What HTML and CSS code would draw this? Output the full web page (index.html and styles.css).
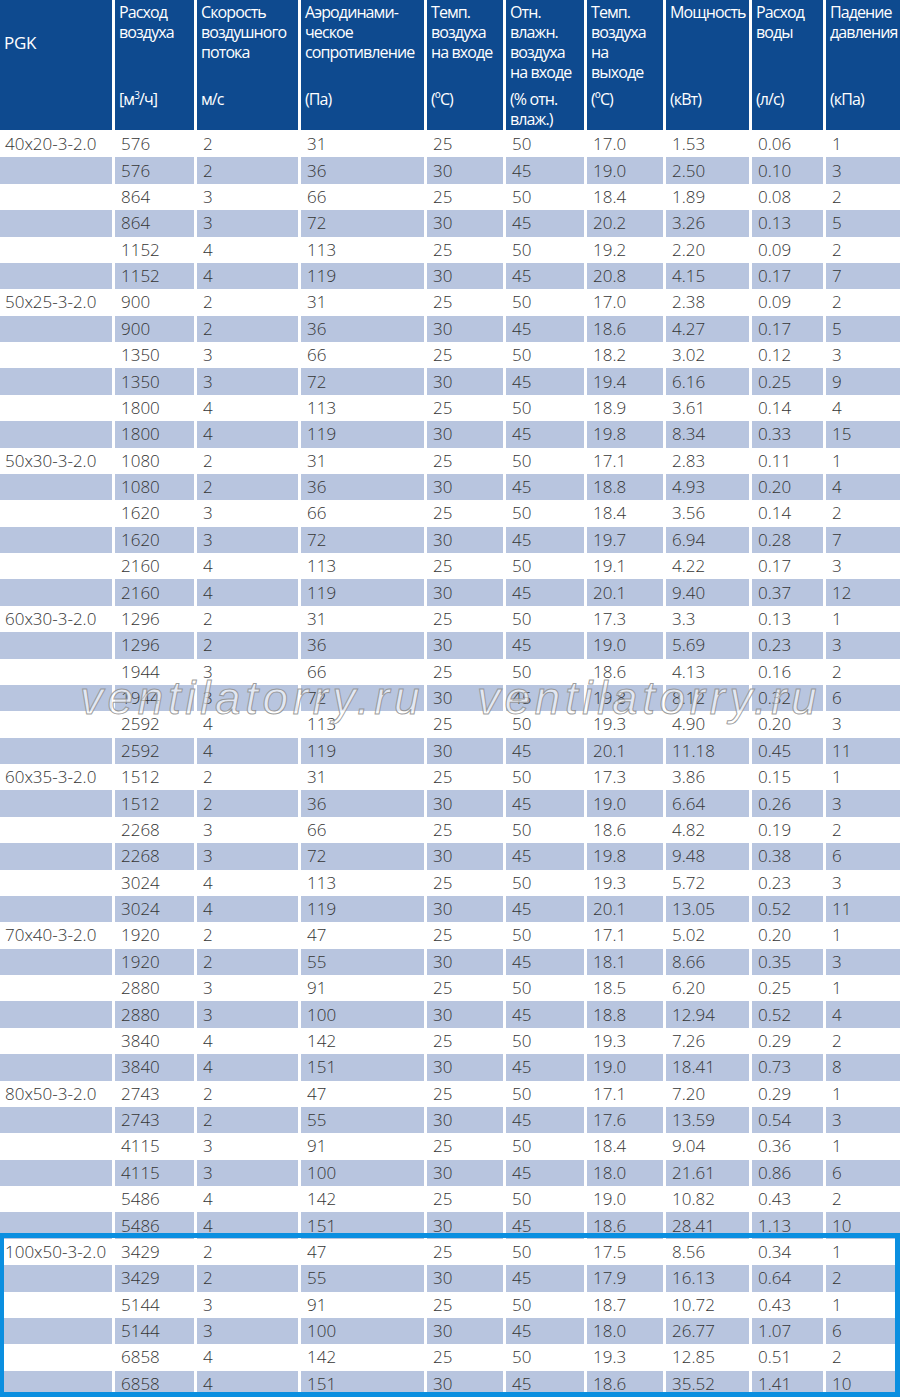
FILE: index.html
```html
<!DOCTYPE html>
<html lang="ru">
<head>
<meta charset="utf-8">
<title>PGK</title>
<link rel="stylesheet" href="styles.css">
</head>
<body>
<div class="wrap">
<table class="spec">
<colgroup>
<col class="c1"><col class="c2"><col class="c3"><col class="c4"><col class="c5"><col class="c6"><col class="c7"><col class="c8"><col class="c9"><col class="c10">
</colgroup>
<thead>
<tr>
<th class="pgk">PGK</th>
<th><div class="t">Расход<br>воздуха</div><div class="u">[м<sup>3</sup>/ч]</div></th>
<th><div class="t">Скорость<br>воздушного<br>потока</div><div class="u">м/с</div></th>
<th><div class="t">Аэродинами-<br>ческое<br>сопротивление</div><div class="u">(Па)</div></th>
<th><div class="t">Темп.<br>воздуха<br>на входе</div><div class="u">(ºC)</div></th>
<th><div class="t">Отн.<br>влажн.<br>воздуха<br>на входе</div><div class="u">(% отн.<br>влаж.)</div></th>
<th><div class="t">Темп.<br>воздуха<br>на<br>выходе</div><div class="u">(ºC)</div></th>
<th><div class="t">Мощность</div><div class="u">(кВт)</div></th>
<th><div class="t">Расход<br>воды</div><div class="u">(л/с)</div></th>
<th><div class="t">Падение<br>давления</div><div class="u">(кПа)</div></th>
</tr>
</thead>
<tbody>
<tr><td>40x20-3-2.0</td><td>576</td><td>2</td><td>31</td><td>25</td><td>50</td><td>17.0</td><td>1.53</td><td>0.06</td><td>1</td></tr>
<tr><td></td><td>576</td><td>2</td><td>36</td><td>30</td><td>45</td><td>19.0</td><td>2.50</td><td>0.10</td><td>3</td></tr>
<tr><td></td><td>864</td><td>3</td><td>66</td><td>25</td><td>50</td><td>18.4</td><td>1.89</td><td>0.08</td><td>2</td></tr>
<tr><td></td><td>864</td><td>3</td><td>72</td><td>30</td><td>45</td><td>20.2</td><td>3.26</td><td>0.13</td><td>5</td></tr>
<tr><td></td><td>1152</td><td>4</td><td>113</td><td>25</td><td>50</td><td>19.2</td><td>2.20</td><td>0.09</td><td>2</td></tr>
<tr><td></td><td>1152</td><td>4</td><td>119</td><td>30</td><td>45</td><td>20.8</td><td>4.15</td><td>0.17</td><td>7</td></tr>
<tr><td>50x25-3-2.0</td><td>900</td><td>2</td><td>31</td><td>25</td><td>50</td><td>17.0</td><td>2.38</td><td>0.09</td><td>2</td></tr>
<tr><td></td><td>900</td><td>2</td><td>36</td><td>30</td><td>45</td><td>18.6</td><td>4.27</td><td>0.17</td><td>5</td></tr>
<tr><td></td><td>1350</td><td>3</td><td>66</td><td>25</td><td>50</td><td>18.2</td><td>3.02</td><td>0.12</td><td>3</td></tr>
<tr><td></td><td>1350</td><td>3</td><td>72</td><td>30</td><td>45</td><td>19.4</td><td>6.16</td><td>0.25</td><td>9</td></tr>
<tr><td></td><td>1800</td><td>4</td><td>113</td><td>25</td><td>50</td><td>18.9</td><td>3.61</td><td>0.14</td><td>4</td></tr>
<tr><td></td><td>1800</td><td>4</td><td>119</td><td>30</td><td>45</td><td>19.8</td><td>8.34</td><td>0.33</td><td>15</td></tr>
<tr><td>50x30-3-2.0</td><td>1080</td><td>2</td><td>31</td><td>25</td><td>50</td><td>17.1</td><td>2.83</td><td>0.11</td><td>1</td></tr>
<tr><td></td><td>1080</td><td>2</td><td>36</td><td>30</td><td>45</td><td>18.8</td><td>4.93</td><td>0.20</td><td>4</td></tr>
<tr><td></td><td>1620</td><td>3</td><td>66</td><td>25</td><td>50</td><td>18.4</td><td>3.56</td><td>0.14</td><td>2</td></tr>
<tr><td></td><td>1620</td><td>3</td><td>72</td><td>30</td><td>45</td><td>19.7</td><td>6.94</td><td>0.28</td><td>7</td></tr>
<tr><td></td><td>2160</td><td>4</td><td>113</td><td>25</td><td>50</td><td>19.1</td><td>4.22</td><td>0.17</td><td>3</td></tr>
<tr><td></td><td>2160</td><td>4</td><td>119</td><td>30</td><td>45</td><td>20.1</td><td>9.40</td><td>0.37</td><td>12</td></tr>
<tr><td>60x30-3-2.0</td><td>1296</td><td>2</td><td>31</td><td>25</td><td>50</td><td>17.3</td><td>3.3</td><td>0.13</td><td>1</td></tr>
<tr><td></td><td>1296</td><td>2</td><td>36</td><td>30</td><td>45</td><td>19.0</td><td>5.69</td><td>0.23</td><td>3</td></tr>
<tr><td></td><td>1944</td><td>3</td><td>66</td><td>25</td><td>50</td><td>18.6</td><td>4.13</td><td>0.16</td><td>2</td></tr>
<tr><td></td><td>1944</td><td>3</td><td>72</td><td>30</td><td>45</td><td>19.8</td><td>8.12</td><td>0.32</td><td>6</td></tr>
<tr><td></td><td>2592</td><td>4</td><td>113</td><td>25</td><td>50</td><td>19.3</td><td>4.90</td><td>0.20</td><td>3</td></tr>
<tr><td></td><td>2592</td><td>4</td><td>119</td><td>30</td><td>45</td><td>20.1</td><td>11.18</td><td>0.45</td><td>11</td></tr>
<tr><td>60x35-3-2.0</td><td>1512</td><td>2</td><td>31</td><td>25</td><td>50</td><td>17.3</td><td>3.86</td><td>0.15</td><td>1</td></tr>
<tr><td></td><td>1512</td><td>2</td><td>36</td><td>30</td><td>45</td><td>19.0</td><td>6.64</td><td>0.26</td><td>3</td></tr>
<tr><td></td><td>2268</td><td>3</td><td>66</td><td>25</td><td>50</td><td>18.6</td><td>4.82</td><td>0.19</td><td>2</td></tr>
<tr><td></td><td>2268</td><td>3</td><td>72</td><td>30</td><td>45</td><td>19.8</td><td>9.48</td><td>0.38</td><td>6</td></tr>
<tr><td></td><td>3024</td><td>4</td><td>113</td><td>25</td><td>50</td><td>19.3</td><td>5.72</td><td>0.23</td><td>3</td></tr>
<tr><td></td><td>3024</td><td>4</td><td>119</td><td>30</td><td>45</td><td>20.1</td><td>13.05</td><td>0.52</td><td>11</td></tr>
<tr><td>70x40-3-2.0</td><td>1920</td><td>2</td><td>47</td><td>25</td><td>50</td><td>17.1</td><td>5.02</td><td>0.20</td><td>1</td></tr>
<tr><td></td><td>1920</td><td>2</td><td>55</td><td>30</td><td>45</td><td>18.1</td><td>8.66</td><td>0.35</td><td>3</td></tr>
<tr><td></td><td>2880</td><td>3</td><td>91</td><td>25</td><td>50</td><td>18.5</td><td>6.20</td><td>0.25</td><td>1</td></tr>
<tr><td></td><td>2880</td><td>3</td><td>100</td><td>30</td><td>45</td><td>18.8</td><td>12.94</td><td>0.52</td><td>4</td></tr>
<tr><td></td><td>3840</td><td>4</td><td>142</td><td>25</td><td>50</td><td>19.3</td><td>7.26</td><td>0.29</td><td>2</td></tr>
<tr><td></td><td>3840</td><td>4</td><td>151</td><td>30</td><td>45</td><td>19.0</td><td>18.41</td><td>0.73</td><td>8</td></tr>
<tr><td>80x50-3-2.0</td><td>2743</td><td>2</td><td>47</td><td>25</td><td>50</td><td>17.1</td><td>7.20</td><td>0.29</td><td>1</td></tr>
<tr><td></td><td>2743</td><td>2</td><td>55</td><td>30</td><td>45</td><td>17.6</td><td>13.59</td><td>0.54</td><td>3</td></tr>
<tr><td></td><td>4115</td><td>3</td><td>91</td><td>25</td><td>50</td><td>18.4</td><td>9.04</td><td>0.36</td><td>1</td></tr>
<tr><td></td><td>4115</td><td>3</td><td>100</td><td>30</td><td>45</td><td>18.0</td><td>21.61</td><td>0.86</td><td>6</td></tr>
<tr><td></td><td>5486</td><td>4</td><td>142</td><td>25</td><td>50</td><td>19.0</td><td>10.82</td><td>0.43</td><td>2</td></tr>
<tr><td></td><td>5486</td><td>4</td><td>151</td><td>30</td><td>45</td><td>18.6</td><td>28.41</td><td>1.13</td><td>10</td></tr>
<tr><td>100x50-3-2.0</td><td>3429</td><td>2</td><td>47</td><td>25</td><td>50</td><td>17.5</td><td>8.56</td><td>0.34</td><td>1</td></tr>
<tr><td></td><td>3429</td><td>2</td><td>55</td><td>30</td><td>45</td><td>17.9</td><td>16.13</td><td>0.64</td><td>2</td></tr>
<tr><td></td><td>5144</td><td>3</td><td>91</td><td>25</td><td>50</td><td>18.7</td><td>10.72</td><td>0.43</td><td>1</td></tr>
<tr><td></td><td>5144</td><td>3</td><td>100</td><td>30</td><td>45</td><td>18.0</td><td>26.77</td><td>1.07</td><td>6</td></tr>
<tr><td></td><td>6858</td><td>4</td><td>142</td><td>25</td><td>50</td><td>19.3</td><td>12.85</td><td>0.51</td><td>2</td></tr>
<tr><td></td><td>6858</td><td>4</td><td>151</td><td>30</td><td>45</td><td>18.6</td><td>35.52</td><td>1.41</td><td>10</td></tr>
</tbody>
</table>
<div class="mark mark-a">ventilatorry.ru</div>
<div class="mark mark-b">ventilatorry.ru</div>
<div class="frame"></div>
</div>
</body>
</html>
```

FILE: styles.css
```css
html, body {
  margin: 0;
  padding: 0;
  background: #ffffff;
}

.wrap {
  position: relative;
  width: 900px;
  height: 1397px;
  overflow: hidden;
}

.spec {
  table-layout: fixed;
  border-collapse: separate;
  border-spacing: 3px 0;
  margin-left: -3px;
  width: 912px;
  font-family: "Open Sans", "Noto Sans", sans-serif;
}

.c1 { width: 112px; }
.c2 { width: 79px; }
.c3 { width: 101px; }
.c4 { width: 123px; }
.c5 { width: 76px; }
.c6 { width: 78px; }
.c7 { width: 76px; }
.c8 { width: 83px; }
.c9 { width: 71px; }
.c10 { width: 80px; }

.spec th {
  background: #0e4a8f;
  color: #ffffff;
  font-weight: 500;
  font-size: 16px;
  letter-spacing: -0.9px;
  line-height: 20px;
  text-align: left;
  vertical-align: top;
  height: 130px;
  padding: 0 0 0 4px;
  border-bottom: 1px solid #ffffff;
  white-space: nowrap;
  overflow: hidden;
  box-sizing: content-box;
}

.spec th.pgk {
  padding-top: 33px;
  font-size: 17px;
  letter-spacing: -0.3px;
  height: 97px;
}

.t {
  height: 87px;
  padding-top: 2px;
}

.u {
  white-space: nowrap;
}

.u sup {
  font-size: 10px;
  line-height: 0;
  vertical-align: 6px;
}

.spec td {
  height: 26.375px;
  padding: 0 0 0 6px;
  font-size: 17px;
  font-weight: 300;
  line-height: 20px;
  color: #353535;
  white-space: nowrap;
  vertical-align: middle;
  box-sizing: border-box;
}

.spec td:first-child {
  padding-left: 5px;
}

.spec tbody tr:nth-child(even) td {
  background: #b8c5df;
}

.mark {
  position: absolute;
  top: 670px;
  font-family: "Liberation Sans", Arial, sans-serif;
  font-style: italic;
  font-size: 46px;
  line-height: 56px;
  letter-spacing: 4.6px;
  color: rgba(255, 255, 255, 0.6);
  -webkit-text-stroke: 1px rgba(140, 140, 140, 0.85);
  white-space: nowrap;
  pointer-events: none;
}

.mark-a { left: 80px; }
.mark-b { left: 477px; }

.frame {
  position: absolute;
  left: 0;
  top: 1233px;
  width: 900px;
  height: 164px;
  box-sizing: border-box;
  border-style: solid;
  border-color: #0b8fe0;
  border-width: 5px 5px 5px 4px;
}
```
